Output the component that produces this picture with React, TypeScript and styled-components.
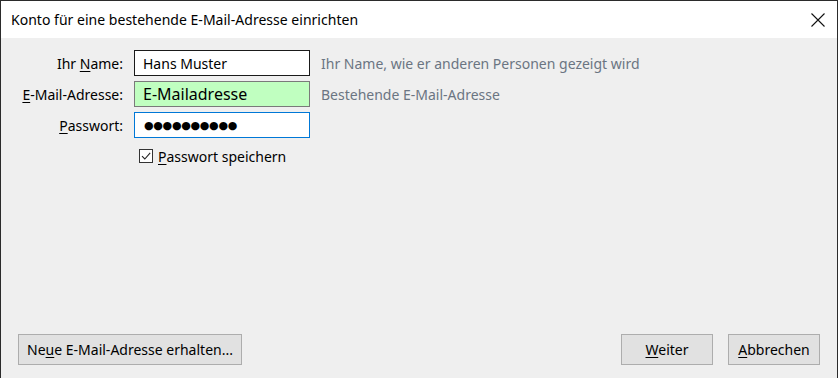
import styled, { createGlobalStyle } from "styled-components";

const GlobalStyle = createGlobalStyle`
  html, body {
    margin: 0;
    padding: 0;
    background: #efefef;
  }
  body {
    font-family: "Noto Sans", "Open Sans", sans-serif;
    font-size: 14px;
    color: #000;
  }
`;

const Window = styled.div`
  box-sizing: border-box;
  width: 838px;
  height: 378px;
  display: flex;
  flex-direction: column;
  border: 1px solid #2b2b2b;
  border-bottom: none;
  background: #efefef;
`;

const TitleBar = styled.div`
  display: flex;
  align-items: center;
  justify-content: space-between;
  height: 37px;
  flex: none;
  padding: 0 12px 0 10px;
  background: #fff;
`;

const Title = styled.div`
  font-size: 14px;
  letter-spacing: 0.02px;
`;

const CloseButton = styled.div`
  display: flex;
  width: 14px;
  height: 14px;
`;

const Body = styled.div`
  flex: 1;
  display: flex;
  flex-direction: column;
  justify-content: space-between;
  padding: 12px 17px 13px 17px;
`;

const Form = styled.div`
  display: grid;
  grid-template-columns: 105px 176px auto;
  grid-auto-rows: 26px;
  column-gap: 11px;
  row-gap: 5px;
  align-items: center;
`;

const Label = styled.label`
  text-align: right;
  white-space: nowrap;
`;

const Input = styled.div<{ $variant?: "focus" | "valid" }>`
  box-sizing: border-box;
  height: 26px;
  display: flex;
  align-items: center;
  padding: 0 8px;
  white-space: nowrap;
  background: ${(p) => (p.$variant === "valid" ? "#c0ffc0" : "#fff")};
  border: 1px solid
    ${(p) =>
      p.$variant === "focus" ? "#0078d7" : p.$variant === "valid" ? "#7a7a7a" : "#1a1a1a"};
  font-size: ${(p) => (p.$variant === "valid" ? "16px" : "14px")};
`;

const Dots = styled.span`
  font-size: 11px;
  letter-spacing: -0.3px;
  font-family: "DejaVu Sans", sans-serif;
  padding-left: 1px;
`;

const Hint = styled.div`
  color: #6b7582;
  white-space: nowrap;
`;

const CheckRow = styled.div`
  grid-column: 2 / 4;
  display: flex;
  align-items: center;
  gap: 5px;
  margin-left: 5px;
`;

const Box = styled.span`
  box-sizing: border-box;
  width: 14px;
  height: 14px;
  border: 1px solid #333;
  background: #fff;
  display: flex;
`;

const Footer = styled.div`
  display: flex;
  align-items: center;
`;

const Button = styled.button<{ $wide?: boolean }>`
  box-sizing: border-box;
  height: 31px;
  min-width: ${(p) => (p.$wide ? "224px" : "92px")};
  padding: 0 8px;
  background: #e1e1e1;
  border: 1px solid #adadad;
  font: inherit;
  color: #000;
`;

const Spacer = styled.div`
  flex: 1;
`;

const Gap = styled.div`
  width: 15px;
`;

const U = styled.span`
  text-decoration: underline;
  text-underline-offset: 2px;
`;

export default function App() {
  return (
    <>
      <GlobalStyle />
      <Window>
        <TitleBar>
          <Title>Konto für eine bestehende E-Mail-Adresse einrichten</Title>
          <CloseButton>
            <svg width="14" height="14" viewBox="0 0 14 14">
              <path d="M0.5 0.5 L13.5 13.5 M13.5 0.5 L0.5 13.5" stroke="#111" strokeWidth="1.1" />
            </svg>
          </CloseButton>
        </TitleBar>
        <Body>
          <Form>
            <Label>
              Ihr <U>N</U>ame:
            </Label>
            <Input>Hans Muster</Input>
            <Hint>Ihr Name, wie er anderen Personen gezeigt wird</Hint>

            <Label>
              <U>E</U>-Mail-Adresse:
            </Label>
            <Input $variant="valid">E-Mailadresse</Input>
            <Hint>Bestehende E-Mail-Adresse</Hint>

            <Label>
              <U>P</U>asswort:
            </Label>
            <Input $variant="focus">
              <Dots>●●●●●●●●●●</Dots>
            </Input>
            <span />

            <span />
            <CheckRow>
              <Box>
                <svg width="12" height="12" viewBox="0 0 12 12">
                  <path d="M2 6.2 L4.8 9 L10.2 2.8" fill="none" stroke="#222" strokeWidth="1.1" />
                </svg>
              </Box>
              <span>
                <U>P</U>asswort speichern
              </span>
            </CheckRow>
          </Form>
          <Footer>
            <Button $wide>
              Ne<U>u</U>e E-Mail-Adresse erhalten...
            </Button>
            <Spacer />
            <Button>
              <U>W</U>eiter
            </Button>
            <Gap />
            <Button>
              <U>A</U>bbrechen
            </Button>
          </Footer>
        </Body>
      </Window>
    </>
  );
}
